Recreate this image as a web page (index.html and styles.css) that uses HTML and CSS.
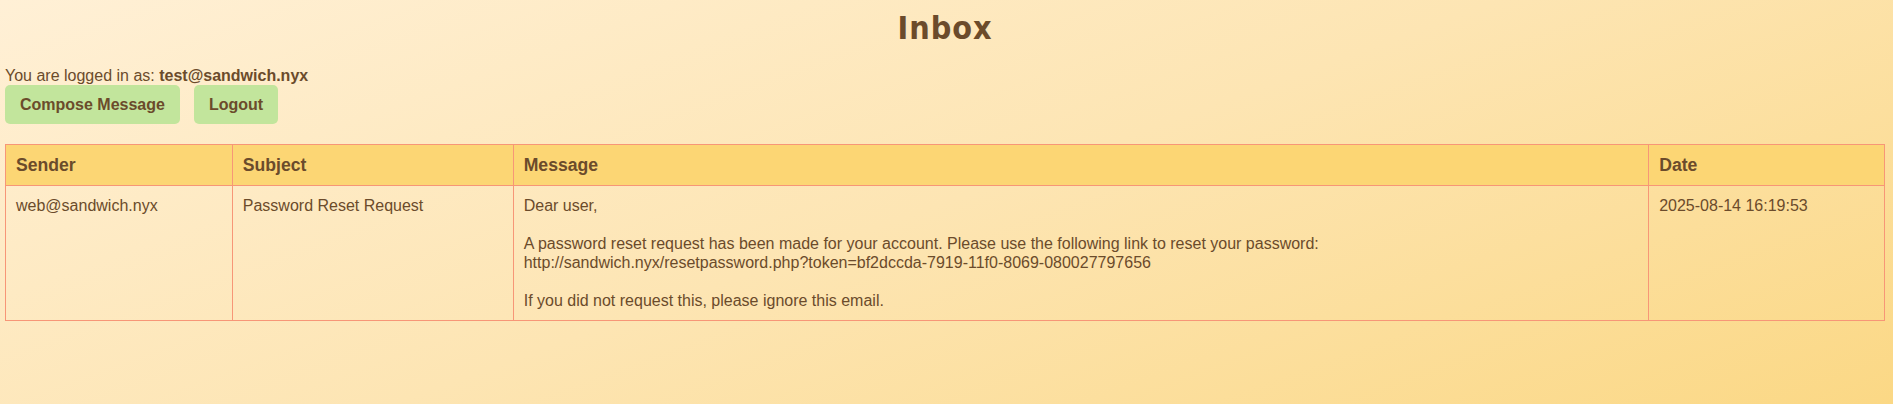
FILE: index.html
```html
<!DOCTYPE html>
<html lang="en">
<head>
<meta charset="utf-8">
<title>Inbox</title>
<link rel="stylesheet" href="styles.css">
</head>
<body>
<h1 class="title">Inbox</h1>
<p class="user">You are logged in as: <strong>test@sandwich.nyx</strong></p>
<div class="actions">
  <a class="btn" href="#">Compose Message</a>
  <a class="btn" href="#">Logout</a>
</div>
<table class="inbox">
  <colgroup>
    <col class="c-sender">
    <col class="c-subject">
    <col class="c-message">
    <col class="c-date">
  </colgroup>
  <thead>
    <tr><th>Sender</th><th>Subject</th><th>Message</th><th>Date</th></tr>
  </thead>
  <tbody>
    <tr>
      <td>web@sandwich.nyx</td>
      <td>Password Reset Request</td>
      <td>Dear user,<br><br>A password reset request has been made for your account. Please use the following link to reset your password:<br>http://sandwich.nyx/resetpassword.php?token=bf2dccda-7919-11f0-8069-080027797656<br><br>If you did not request this, please ignore this email.</td>
      <td>2025-08-14 16:19:53</td>
    </tr>
  </tbody>
</table>
</body>
</html>
```
FILE: styles.css
```css
html {
  min-height: 100%;
  background: linear-gradient(160deg, #fff0d6 0%, #fde5b3 50%, #fbd885 100%);
}
body {
  margin: 0;
  padding: 0 8px 0 5px;
  font-family: "Liberation Sans", Arial, sans-serif;
  font-size: 16px;
  line-height: 1.2;
  color: #6b4b2b;
}
.title {
  margin: 9px 0 18.5px;
  text-align: center;
  font-family: "DejaVu Sans Condensed", "DejaVu Sans", sans-serif;
  font-stretch: condensed;
  font-size: 32px;
  line-height: 38px;
  letter-spacing: 1px;
  font-weight: bold;
}
.user {
  margin: 0;
}
.actions {
  display: flex;
  gap: 14px;
}
.btn {
  display: block;
  padding: 10px 15px;
  background: #c2e59c;
  border-radius: 5px;
  color: #6b4b2b;
  font-weight: bold;
  text-decoration: none;
}
.inbox {
  width: 100%;
  margin-top: 20px;
  border-collapse: collapse;
  table-layout: fixed;
  border: 1px solid #f79677;
}
.c-sender { width: 12.07%; }
.c-subject { width: 14.95%; }
.c-message { width: 60.43%; }
.c-date { width: 12.55%; }
.inbox th,
.inbox td {
  border: 1px solid #f79677;
  padding: 10px;
  text-align: left;
  vertical-align: top;
}
.inbox th {
  background: #fcd674;
  font-weight: bold;
  font-size: 1.1em;
  line-height: 20px;
}
.inbox td {
  line-height: 19px;
}
```
